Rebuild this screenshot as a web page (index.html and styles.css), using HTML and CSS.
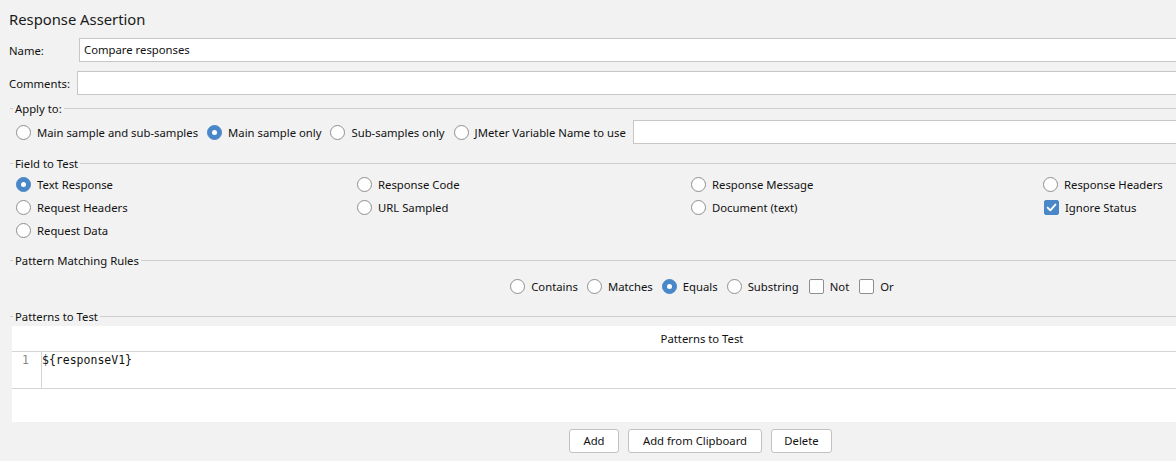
FILE: index.html
```html
<!DOCTYPE html>
<html>
<head>
<meta charset="utf-8">
<title>Response Assertion</title>
<link rel="stylesheet" href="styles.css">
</head>
<body>
<div class="page">
  <div class="title">Response Assertion</div>

  <div class="field-row">
    <span class="field-label name-label">Name:</span>
    <div class="text-input">Compare responses</div>
  </div>
  <div class="field-row comments-row">
    <span class="field-label comments-label">Comments:</span>
    <div class="text-input"></div>
  </div>

  <section class="group apply-group">
    <div class="legend"><span>Apply to:</span></div>
    <div class="apply-row">
      <span class="opt"><span class="radio"></span>Main sample and sub-samples</span>
      <span class="opt"><span class="radio on"></span>Main sample only</span>
      <span class="opt"><span class="radio"></span>Sub-samples only</span>
      <span class="opt"><span class="radio"></span>JMeter Variable Name to use</span>
      <div class="text-input var-input"></div>
    </div>
  </section>

  <section class="group field-group">
    <div class="legend"><span>Field to Test</span></div>
    <div class="field-grid">
      <span class="opt"><span class="radio on"></span>Text Response</span>
      <span class="opt"><span class="radio"></span>Response Code</span>
      <span class="opt"><span class="radio"></span>Response Message</span>
      <span class="opt"><span class="radio"></span>Response Headers</span>
      <span class="opt"><span class="radio"></span>Request Headers</span>
      <span class="opt"><span class="radio"></span>URL Sampled</span>
      <span class="opt"><span class="radio"></span>Document (text)</span>
      <span class="opt cb-opt"><span class="check on"><svg viewBox="0 0 15 15" width="15" height="15"><path d="M3.6 7.6 L6.3 10.3 L11.4 4.6" fill="none" stroke="#fff" stroke-width="1.9" stroke-linecap="round" stroke-linejoin="round"/></svg></span>Ignore Status</span>
      <span class="opt"><span class="radio"></span>Request Data</span>
    </div>
  </section>

  <section class="group rules-group">
    <div class="legend"><span>Pattern Matching Rules</span></div>
    <div class="rules-row">
      <span class="opt"><span class="radio"></span>Contains</span>
      <span class="opt"><span class="radio"></span>Matches</span>
      <span class="opt"><span class="radio on"></span>Equals</span>
      <span class="opt"><span class="radio"></span>Substring</span>
      <span class="opt cb-opt"><span class="check"></span>Not</span>
      <span class="opt cb-opt"><span class="check"></span>Or</span>
    </div>
  </section>

  <section class="group patterns-group">
    <div class="legend"><span>Patterns to Test</span></div>
    <div class="table">
      <div class="table-head">Patterns to Test</div>
      <div class="table-row">
        <div class="gutter">1</div>
        <div class="code">${responseV1}</div>
      </div>
    </div>
  </section>

  <div class="buttons">
    <button class="btn btn-add">Add</button>
    <button class="btn btn-clip">Add from Clipboard</button>
    <button class="btn btn-del">Delete</button>
  </div>
</div>
</body>
</html>
```

FILE: styles.css
```css
html, body {
  margin: 0;
  padding: 0;
}
body {
  width: 1176px;
  height: 461px;
  overflow: hidden;
  background: #f2f2f2;
  font-family: "Noto Sans", "Open Sans", sans-serif;
  font-size: 11.3px;
  color: #111;
}
.page {
  width: 1402px;
}
.title {
  font-size: 14.8px;
  height: 38px;
  line-height: 38px;
  padding-left: 9px;
  color: #1a1a1a;
}
.field-row {
  display: flex;
  align-items: center;
  height: 24px;
  padding-left: 9px;
}
.comments-row {
  margin-top: 9px;
}
.name-label { width: 70px; }
.comments-label { width: 68px; }
.text-input {
  flex: 1;
  height: 24px;
  box-sizing: border-box;
  border: 1px solid #c6c6c6;
  background: #fff;
  padding: 0 4px;
  line-height: 22px;
  white-space: nowrap;
}

.group {
  margin-left: 10px;
  width: 1384px;
}
.legend {
  display: flex;
  align-items: center;
  height: 16px;
  white-space: nowrap;
}
.legend::before {
  content: "";
  width: 3px;
  height: 1px;
  background: #cdcdcd;
  margin-right: 2px;
}
.legend::after {
  content: "";
  flex: 1;
  height: 1px;
  background: #cdcdcd;
  margin-left: 2px;
}

.opt {
  display: inline-flex;
  align-items: center;
  gap: 6px;
  white-space: nowrap;
}
.radio {
  width: 15px;
  height: 15px;
  box-sizing: border-box;
  border-radius: 50%;
  border: 1px solid #8f8f8f;
  background: #fff;
  position: relative;
  flex: none;
}
.radio.on {
  background: #4a87c8;
  border-color: #4a87c8;
}
.radio.on::after {
  content: "";
  position: absolute;
  left: 4px;
  top: 4px;
  width: 5px;
  height: 5px;
  border-radius: 50%;
  background: #fff;
}
.check {
  width: 15px;
  height: 15px;
  box-sizing: border-box;
  border-radius: 2px;
  border: 1px solid #8f8f8f;
  background: #fff;
  flex: none;
  display: block;
}
.check svg { display: block; margin: -1px; }
.check.on {
  background: #4a87c8;
  border-color: #4a87c8;
}

.apply-group { margin-top: 5px; }
.apply-row {
  display: flex;
  align-items: center;
  height: 24px;
  margin-top: 4px;
  padding-left: 6px;
  gap: 9px;
}
.var-input {
  margin-left: -2px;
}

.field-group { margin-top: 11px; }
.field-grid {
  display: grid;
  grid-template-columns: 341px 334px 352px 1fr;
  grid-auto-rows: 23px;
  align-items: center;
  padding-top: 2px;
  padding-left: 6px;
}
.field-grid .cb-opt { padding-left: 1px; }

.rules-group { margin-top: 10px; }
.rules-row {
  display: flex;
  justify-content: center;
  align-items: center;
  height: 22px;
  margin-top: 7px;
  gap: 9px;
}
.rules-row .cb-opt { margin-left: 1px; }

.patterns-group { margin-top: 11px; }
.table {
  margin: 2px 2px 0;
  height: 96px;
  background: #fff;
}
.table-head {
  height: 26px;
  box-sizing: border-box;
  border-bottom: 1px solid #d4d4d4;
  text-align: center;
  padding-top: 2px;
  line-height: 22px;
}
.table-row {
  display: flex;
  height: 37px;
  box-sizing: border-box;
  border-bottom: 1px solid #d4d4d4;
}
.gutter {
  width: 30px;
  box-sizing: border-box;
  border-right: 1px solid #d4d4d4;
  text-align: right;
  padding-right: 12px;
  font-family: "DejaVu Sans Mono", monospace;
  font-size: 11.5px;
  line-height: 16px;
  color: #8a8a8a;
}
.code {
  padding-left: 0;
  font-family: "DejaVu Sans Mono", monospace;
  font-size: 11.5px;
  line-height: 16px;
  color: #111;
}

.buttons {
  display: flex;
  justify-content: center;
  gap: 9px;
  margin-top: 7px;
  padding-right: 1px;
}
.btn {
  height: 24px;
  box-sizing: border-box;
  border: 1px solid #c2c2c2;
  border-radius: 3px;
  background: #fff;
  font-family: inherit;
  font-size: 11.3px;
  color: #111;
  padding: 0;
  line-height: 22px;
}
.btn-add { width: 50px; }
.btn-clip { width: 134px; }
.btn-del { width: 61px; }
```
